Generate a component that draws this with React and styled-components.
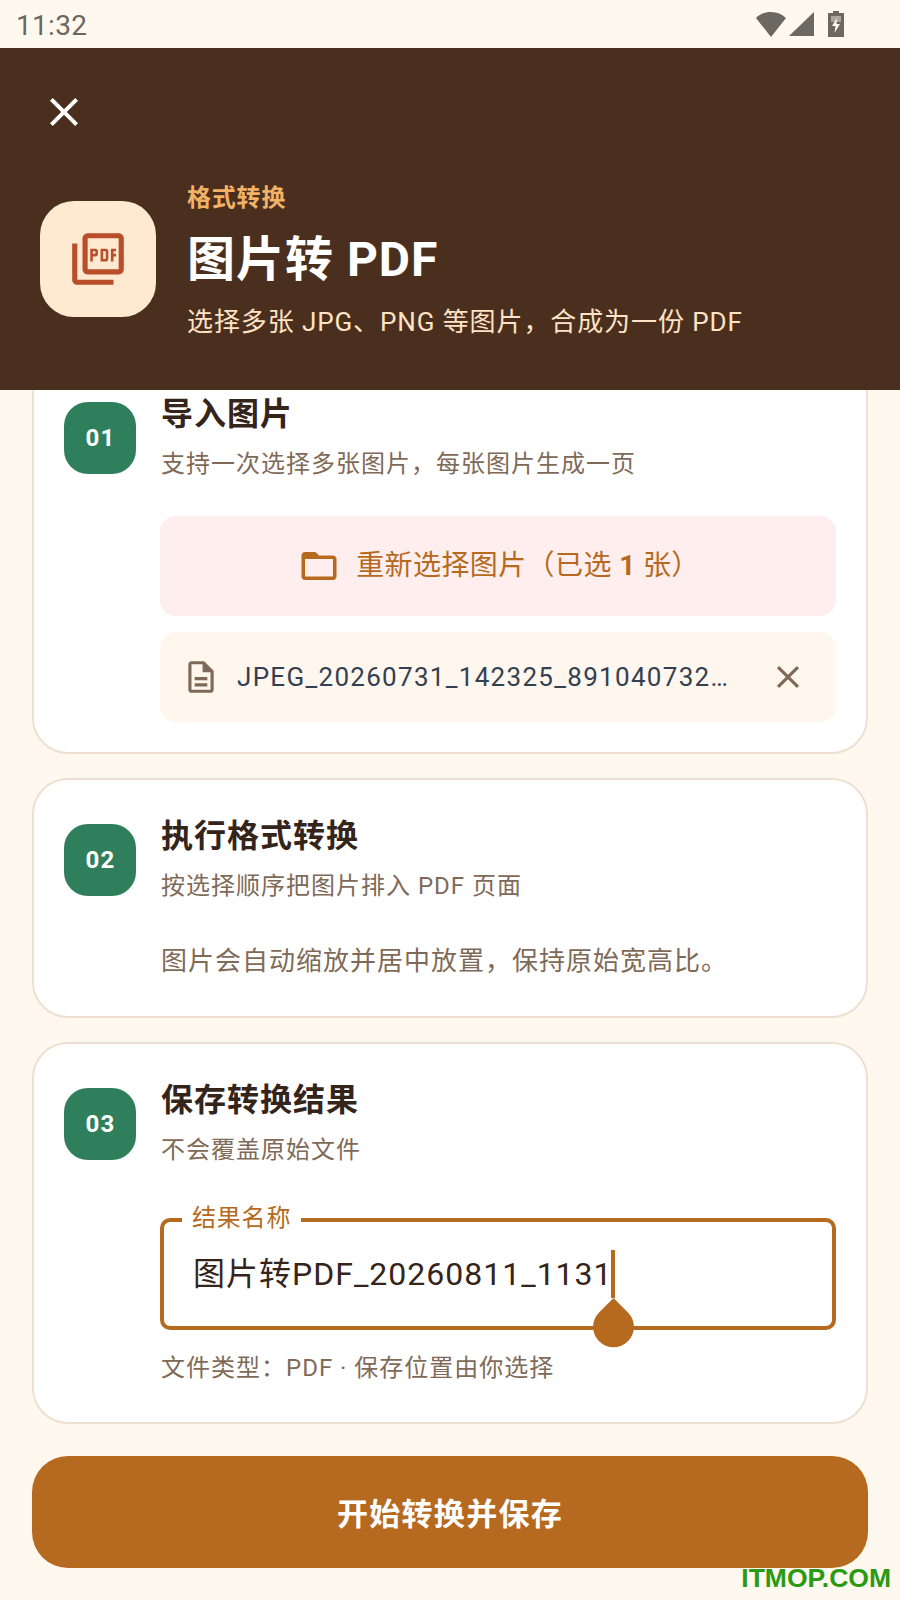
import styled, { createGlobalStyle } from "styled-components";
import { MdClose, MdOutlineDescription, MdOutlinePictureAsPdf } from "react-icons/md";

const GlobalStyle = createGlobalStyle`
  html, body {
    margin: 0;
    padding: 0;
    background: #fff8ef;
  }
  * {
    box-sizing: border-box;
  }
`;

const Page = styled.div`
  width: 900px;
  height: 1600px;
  overflow: hidden;
  position: relative;
  display: flex;
  flex-direction: column;
  background: #fff8ef;
  font-family: Roboto, "Noto Sans CJK SC", sans-serif;
`;

const StatusBar = styled.div`
  height: 48px;
  padding: 2px 56px 0 16px;
  display: flex;
  align-items: center;
  justify-content: space-between;
  color: #6b6862;
  font-size: 28px;
  letter-spacing: 0.3px;
`;

const StatusIcons = styled.div`
  display: flex;
  align-items: center;
  gap: 3px;
  margin-top: -2px;
`;

const Battery = styled.svg`
  margin-left: 11px;
`;

const Header = styled.header`
  position: relative;
  z-index: 1;
  height: 342px;
  background: #4a2f1e;
  padding: 44px 40px 0;
`;

const CloseBtn = styled.div`
  width: 48px;
  height: 40px;
  display: flex;
  align-items: center;
  justify-content: center;
  color: #fff;
`;

const HeaderRow = styled.div`
  display: flex;
  align-items: center;
  gap: 31px;
  margin-top: 47px;
`;

const AppTile = styled.div`
  width: 116px;
  height: 116px;
  border-radius: 34px;
  background: #ffe9d0;
  color: #b94e2b;
  display: flex;
  align-items: center;
  justify-content: center;
  flex-shrink: 0;
`;

const HeaderText = styled.div`
  display: flex;
  flex-direction: column;
  padding-top: 2px;
`;

const Tag = styled.div`
  color: #f2b266;
  font-size: 24px;
  font-weight: 700;
  line-height: 34px;
  letter-spacing: 0.8px;
`;

const Title = styled.h1`
  margin: 14px 0 0;
  color: #fff;
  font-size: 48px;
  font-weight: 700;
  line-height: 62px;
  letter-spacing: 1px;
`;

const Desc = styled.div`
  margin-top: 14px;
  color: #ffe3c4;
  font-size: 26px;
  line-height: 34px;
  letter-spacing: 0.9px;
`;

const Cards = styled.div`
  margin-top: -34px;
  padding: 0 32px;
  display: flex;
  flex-direction: column;
  gap: 24px;
`;

const Card = styled.section`
  height: ${(p) => p.$height}px;
  border: 2px solid #eee0d0;
  border-radius: 36px;
  background: #fff;
  padding: 36px 30px 0;
  display: grid;
  grid-template-columns: 72px 1fr;
  column-gap: 24px;
  align-content: start;
`;

const Badge = styled.div`
  width: 72px;
  height: 72px;
  margin-top: 8px;
  padding-left: 1px;
  border-radius: 24px;
  background: #2f7f5d;
  color: #fff;
  font-size: 24px;
  font-weight: 700;
  letter-spacing: 1.2px;
  display: flex;
  align-items: center;
  justify-content: center;
`;

const StepBody = styled.div`
  min-width: 0;
  display: flex;
  flex-direction: column;
`;

const StepTitle = styled.h2`
  margin: 0 0 0 1px;
  color: #35241a;
  font-size: 32px;
  font-weight: 700;
  line-height: 40px;
  letter-spacing: 1px;
`;

const StepSub = styled.div`
  margin: 13px 0 0 1px;
  color: #7f6a58;
  font-size: 24px;
  line-height: 34px;
  letter-spacing: 1px;
`;

const StepNote = styled.div`
  margin: 40px 0 0 1px;
  color: #7f6a58;
  font-size: 26px;
  line-height: 36px;
  letter-spacing: 1px;
`;

const PickBtn = styled.div`
  margin-top: 35px;
  height: 100px;
  padding-left: 2px;
  border-radius: 16px;
  background: #ffeeee;
  color: #b66a20;
  font-size: 28px;
  letter-spacing: 0.4px;
  display: flex;
  align-items: center;
  justify-content: center;
  gap: 16px;
`;

const PickLabel = styled.span`
  margin-bottom: 6px;
`;

const FileRow = styled.div`
  margin-top: 16px;
  height: 90px;
  padding: 0 29px 0 22px;
  border-radius: 16px;
  background: #fff7ee;
  display: flex;
  align-items: center;
  justify-content: space-between;
  color: #7f6a58;
`;

const FileName = styled.div`
  flex: 1;
  margin-left: 17px;
  color: #343f52;
  font-size: 26px;
  letter-spacing: 1.3px;
  white-space: nowrap;
`;

const Field = styled.div`
  position: relative;
  margin-top: 51px;
  height: 112px;
  border: 4px solid #b66a20;
  border-radius: 10px;
  padding: 0 29px 6px;
  display: flex;
  align-items: center;
  color: #35241a;
  font-size: 32px;
  letter-spacing: 1px;
`;

const FieldLabel = styled.span`
  position: absolute;
  top: -20px;
  left: 18px;
  padding: 0 10px;
  background: #fff;
  color: #b66a20;
  font-size: 24px;
  line-height: 32px;
  letter-spacing: 0.8px;
`;

const Caret = styled.span`
  position: absolute;
  top: 28px;
  left: 447px;
  width: 4px;
  height: 48px;
  background: #b66a20;
`;

const CaretHandle = styled.svg`
  position: absolute;
  top: 76px;
  left: 429px;
`;

const Helper = styled.div`
  margin: 21px 0 0 1px;
  color: #7f6a58;
  font-size: 24px;
  line-height: 34px;
  letter-spacing: 1px;
`;

const SubmitBtn = styled.div`
  margin: 32px 32px 0;
  height: 112px;
  padding-bottom: 2px;
  border-radius: 36px;
  background: #b66a20;
  color: #fff;
  font-size: 31px;
  font-weight: 700;
  letter-spacing: 1.3px;
  display: flex;
  align-items: center;
  justify-content: center;
`;

const Watermark = styled.div`
  position: absolute;
  right: 9px;
  bottom: 9px;
  color: #2a9a12;
  font-family: "Liberation Sans", sans-serif;
  font-size: 26.500px;
  font-weight: 700;
  line-height: 26px;
`;

const FolderIcon = () => (
  <svg width="42" height="42" viewBox="0 0 24 24" fill="currentColor">
    <path
      fillRule="evenodd"
      d="M10 4H4c-1.100 0-2 .9-2 2v12c0 1.100.9 2 2 2h16c1.100 0 2-.9 2-2V8c0-1.100-.9-2-2-2h-8zM4 8h16v10H4z"
    />
  </svg>
);

const App = () => {
  return (
    <>
      <GlobalStyle />
      <Page>
        <StatusBar>
          <span>11:32</span>
          <StatusIcons>
            <svg width="30" height="25" viewBox="0 0 30 25">
              <path d="M0 6C4 2 9 0 15 0s11 2 15 6L15 25z" fill="#6b6862" />
            </svg>
            <svg width="25" height="24" viewBox="0 0 25 24">
              <path d="M25 0v24H0z" fill="#6b6862" />
            </svg>
            <Battery width="16" height="26" viewBox="0 0 16 26">
              <path d="M5 0h6v2h5v24H0V2h5z" fill="#6b6862" />
              <path d="M3 5h10v6H3z" fill="#a9a6a0" />
              <path d="M9 7 4 15h3.500L6.500 22 12 13H8.500z" fill="#fff8ef" />
            </Battery>
          </StatusIcons>
        </StatusBar>
        <Header>
          <CloseBtn>
            <MdClose size={48} />
          </CloseBtn>
          <HeaderRow>
            <AppTile>
              <MdOutlinePictureAsPdf size={62} />
            </AppTile>
            <HeaderText>
              <Tag>格式转换</Tag>
              <Title>图片转 PDF</Title>
              <Desc>选择多张 JPG、PNG 等图片，合成为一份 PDF</Desc>
            </HeaderText>
          </HeaderRow>
        </Header>
        <Cards>
          <Card $height={398}>
            <Badge>01</Badge>
            <StepBody>
              <StepTitle>导入图片</StepTitle>
              <StepSub>支持一次选择多张图片，每张图片生成一页</StepSub>
              <PickBtn>
                <FolderIcon />
                <PickLabel>
                  重新选择图片（已选 <b>1</b> 张）
                </PickLabel>
              </PickBtn>
              <FileRow>
                <MdOutlineDescription size={38} />
                <FileName>JPEG_20260731_142325_891040732…</FileName>
                <MdClose size={38} />
              </FileRow>
            </StepBody>
          </Card>
          <Card $height={240}>
            <Badge>02</Badge>
            <StepBody>
              <StepTitle>执行格式转换</StepTitle>
              <StepSub>按选择顺序把图片排入 PDF 页面</StepSub>
              <StepNote>图片会自动缩放并居中放置，保持原始宽高比。</StepNote>
            </StepBody>
          </Card>
          <Card $height={382}>
            <Badge>03</Badge>
            <StepBody>
              <StepTitle>保存转换结果</StepTitle>
              <StepSub>不会覆盖原始文件</StepSub>
              <Field>
                <FieldLabel>结果名称</FieldLabel>
                图片转PDF_20260811_1131
                <Caret />
                <CaretHandle width="41" height="51" viewBox="0 0 40 50">
                  <path
                    d="M20 0 34.140 14.140A20 20 0 1 1 5.860 14.140z"
                    fill="#b66a20"
                  />
                </CaretHandle>
              </Field>
              <Helper>文件类型：PDF · 保存位置由你选择</Helper>
            </StepBody>
          </Card>
        </Cards>
        <SubmitBtn>开始转换并保存</SubmitBtn>
        <Watermark>ITMOP.COM</Watermark>
      </Page>
    </>
  );
};

export default App;
